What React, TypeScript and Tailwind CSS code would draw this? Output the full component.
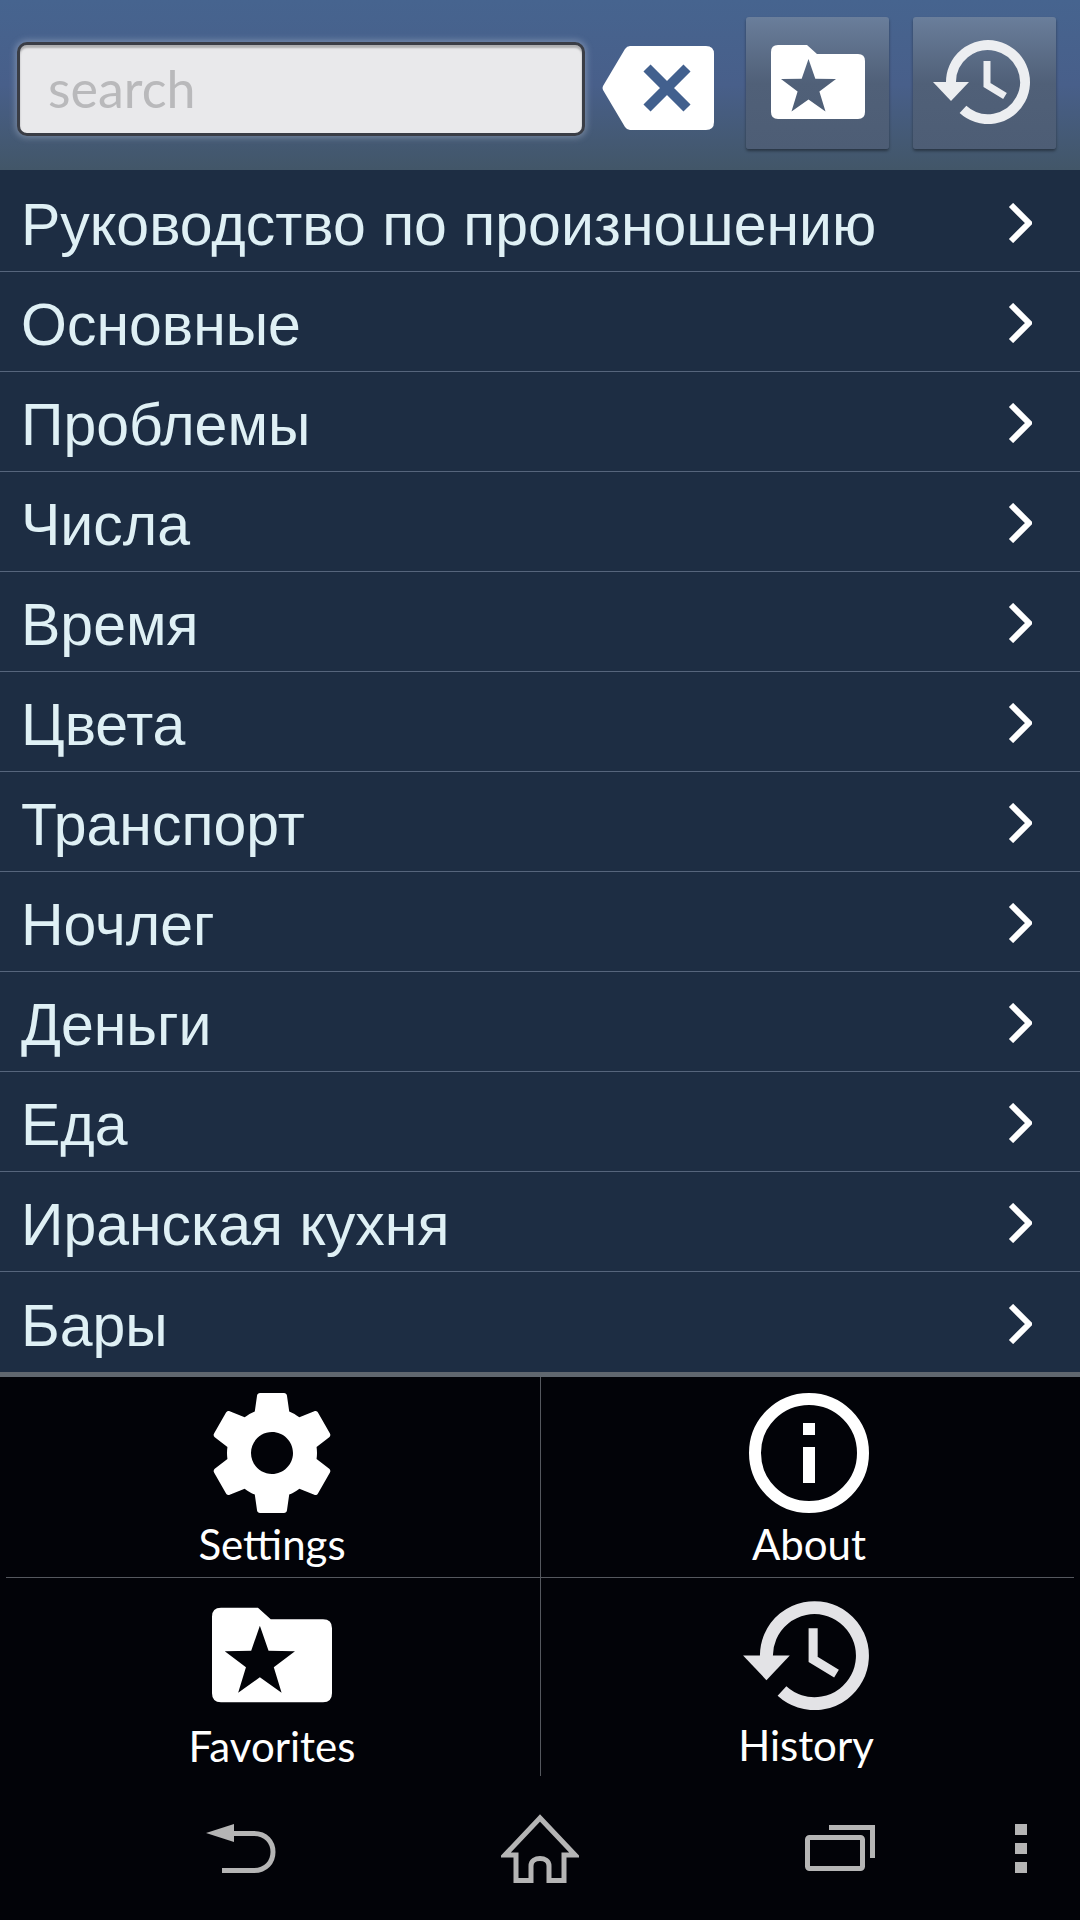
const topics = [
  'Руководство по произношению',
  'Основные',
  'Проблемы',
  'Числа',
  'Время',
  'Цвета',
  'Транспорт',
  'Ночлег',
  'Деньги',
  'Еда',
  'Иранская кухня',
  'Бары',
];

function FolderStarIcon({ className }: { className: string }) {
  return (
    <svg className={className} viewBox="0 0 94 74" fill="currentColor">
      <path
        fillRule="evenodd"
        d="M7 0H36L46 9H87Q94 9 94 16V67Q94 74 87 74H7Q0 74 0 67V7Q0 0 7 0ZM37.5 14L30.7 33.7L10 34L26.6 46.6L20.5 66.5L37.5 54.5L54.5 66.5L48.4 46.6L65 34L44.3 33.7Z"
      />
    </svg>
  );
}

function HistoryIcon({ className }: { className: string }) {
  return (
    <svg className={className} viewBox="0 0 97 84" fill="none">
      <path d="M18 43A37 37 0 1 1 30 69.4" stroke="currentColor" strokeWidth="10" />
      <path d="M0 42H36L18 61Z" fill="currentColor" />
      <path d="M54 21V45L72 56" stroke="currentColor" strokeWidth="7" />
    </svg>
  );
}

function GearIcon() {
  return (
    <svg className="w-[120px] h-[120px]" viewBox="2 2 20 20" fill="#fff">
      <path d="M19.43 12.98c.04-.32.07-.64.07-.98s-.03-.66-.07-.98l2.11-1.65c.19-.15.24-.42.12-.64l-2-3.46c-.12-.22-.39-.3-.61-.22l-2.49 1c-.52-.4-1.08-.73-1.69-.98l-.38-2.65C14.46 2.18 14.25 2 14 2h-4c-.25 0-.46.18-.49.42l-.38 2.65c-.61.25-1.17.59-1.69.98l-2.49-1c-.23-.09-.49 0-.61.22l-2 3.46c-.13.22-.07.49.12.64l2.11 1.65c-.04.32-.07.65-.07.98s.03.66.07.98l-2.11 1.65c-.19.15-.24.42-.12.64l2 3.46c.12.22.39.3.61.22l2.49-1c.52.4 1.08.73 1.69.98l.38 2.65c.03.24.24.42.49.42h4c.25 0 .46-.18.49-.42l.38-2.65c.61-.25 1.17-.59 1.69-.98l2.49 1c.23.09.49 0 .61-.22l2-3.46c.12-.22.07-.49-.12-.64l-2.11-1.65zM12 15.5c-1.93 0-3.5-1.57-3.5-3.5s1.57-3.5 3.5-3.5 3.5 1.57 3.5 3.5-1.57 3.5-3.5 3.5z" />
    </svg>
  );
}

function InfoIcon() {
  return (
    <svg className="w-[120px] h-[120px]" viewBox="0 0 120 120" fill="#fff">
      <circle cx="60" cy="60" r="54" fill="none" stroke="#fff" strokeWidth="12" />
      <rect x="54" y="30" width="12" height="12" />
      <rect x="54" y="54" width="12" height="36" />
    </svg>
  );
}

function MenuCell({ label, icon, className }: { label: string; icon: React.ReactNode; className: string }) {
  return (
    <div className={`flex flex-col items-center ${className}`}>
      {icon}
      <span className="text-[42px] leading-[48px] text-white font-['Lato',sans-serif]">{label}</span>
    </div>
  );
}

export default function App() {
  return (
    <div className="w-[1080px] h-[1920px] flex flex-col bg-[#020308] overflow-hidden">
      {/* Search bar */}
      <div className="h-[170px] flex items-start pl-[17px] bg-linear-to-b from-[#46648f] via-[#485f8a] to-[#425668]">
        <div className="mt-[42px] w-[568px] h-[94px] flex items-center pl-[28px] pb-[2px] rounded-[10px] border-[3px] border-[#3a3d45] bg-[#e9e9eb] shadow-[0_0_6px_2px_rgba(200,210,225,0.35),inset_0_3px_2px_rgba(0,0,0,0.25)]">
          <span className="text-[52px] leading-none text-[#b9b9bb] font-['Lato',sans-serif]">search</span>
        </div>
        <svg className="mt-[46px] ml-[17px] w-[112px] h-[84px]" viewBox="0 0 112 84">
          <path d="M28 0H104Q112 0 112 8V76Q112 84 104 84H28Q25 84 23 81L1 44Q0 42 1 40L23 3Q25 0 28 0Z" fill="#fff" />
          <path d="M45 22L85 62M85 22L45 62" stroke="#42608e" strokeWidth="10" />
        </svg>
        <div className="mt-[17px] ml-[32px] w-[143px] h-[132px] flex items-center justify-center pb-[2px] rounded-[3px] bg-linear-to-b from-[#6a7e9b] via-[#506078] to-[#4d5d75] shadow-[0_2px_3px_rgba(0,0,0,0.4)] text-white">
          <FolderStarIcon className="w-[94px] h-[74px]" />
        </div>
        <div className="mt-[17px] ml-[24px] w-[143px] h-[132px] flex items-center justify-center pr-[6px] pb-[2px] rounded-[3px] bg-linear-to-b from-[#6a7e9b] via-[#506078] to-[#4d5d75] shadow-[0_2px_3px_rgba(0,0,0,0.4)] text-[#eceef1]">
          <HistoryIcon className="w-[97px] h-[84px]" />
        </div>
      </div>

      {/* Topic list */}
      <div className="pt-[2px] bg-[#1d2d43]">
        {topics.map((topic, i) => (
          <div
            key={topic}
            className={`h-[100px] flex items-center justify-between pl-[21px] pr-[48px] ${i < topics.length - 1 ? 'border-b border-[#56657c]' : ''}`}
          >
            <span className="pt-[8px] text-[59px] leading-none text-[#dff0f5] font-['Liberation_Sans',sans-serif]">{topic}</span>
            <svg className="w-[24px] h-[40px] mt-[3px]" viewBox="0 0 24 40" fill="none">
              <path d="M3 2L21 20L3 38" stroke="#fff" strokeWidth="6" />
            </svg>
          </div>
        ))}
      </div>
      <div className="h-[5px] bg-[#60676f]" />

      {/* Bottom menu */}
      <div className="flex h-[200px]">
        <MenuCell label="Settings" icon={<div className="mb-[7px]"><GearIcon /></div>} className="w-[541px] pt-[16px] pl-[4px] border-r border-[#55585e]" />
        <MenuCell label="About" icon={<div className="mb-[7px]"><InfoIcon /></div>} className="flex-1 pt-[16px] pr-[3px]" />
      </div>
      <div className="h-px mx-[6px] bg-[#55585e]" />
      <div className="flex h-[198px]">
        <MenuCell label="Favorites" icon={<div className="mt-[29px] mb-[19px] text-white"><FolderStarIcon className="w-[120px] h-[96px] block" /></div>} className="w-[541px] pl-[4px] border-r border-[#55585e]" />
        <MenuCell label="History" icon={<div className="mt-[23px] mb-[11px] text-[#e3e3e6]"><HistoryIcon className="w-[126px] h-[109px] block" /></div>} className="flex-1 pr-[9px]" />
      </div>

      {/* Android nav bar */}
      <div className="flex-1 text-[#b5b5b5]">
        <div className="h-full flex items-center pl-[206px]">
          <svg className="w-[70px] h-[49px]" viewBox="0 0 70 49" fill="none">
            <path d="M0 9L28 0V18Z" fill="currentColor" />
            <path d="M26 9.5H48C60 9.5 67 18 67 28C67 38 60 46.5 48 46.5H16" stroke="currentColor" strokeWidth="5" />
          </svg>
          <svg className="ml-[225px] w-[78px] h-[69px]" viewBox="0 0 78 69" fill="none">
            <path d="M39 4L4 41H15V66.5H30V52C30 42 48 42 48 52V66.5H63V41H74Z" stroke="currentColor" strokeWidth="5" />
          </svg>
          <svg className="ml-[226px] w-[70px] h-[46px]" viewBox="0 0 70 46" fill="none">
            <rect x="2.5" y="12.5" width="55" height="31" rx="2" stroke="currentColor" strokeWidth="5" />
            <path d="M24 2.5H67.5V33" stroke="currentColor" strokeWidth="5" />
          </svg>
          <div className="ml-[140px] w-[12px] flex flex-col gap-[8px]">
            <div className="h-[11px] bg-current" />
            <div className="h-[11px] bg-current" />
            <div className="h-[11px] bg-current" />
          </div>
        </div>
      </div>
    </div>
  );
}
